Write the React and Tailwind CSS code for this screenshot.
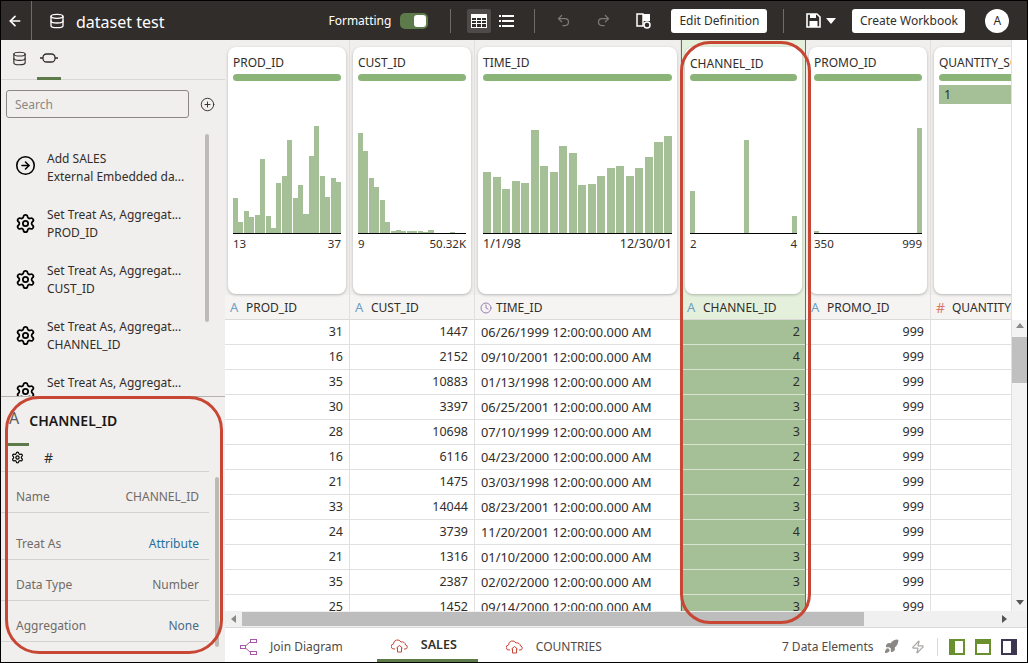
import { ArrowLeft, CirclePlus, CircleArrowRight, Database, Settings, Undo2, Redo2, Clock, Zap, Rocket } from 'lucide-react'

const columns = [
  { name: 'PROD_ID', width: 'w-[125px]', type: 'A', min: '13', max: '37', bars: [35, 11, 22, 16, 18, 74, 17, 5, 50, 57, 93, 35, 48, 19, 77, 107, 57, 36, 55, 51] },
  { name: 'CUST_ID', width: 'w-[125px]', type: 'A', min: '9', max: '50.32K', bars: [100, 82, 55, 46, 33, 11, 2, 3, 2, 2, 2, 2, 1, 3, 0, 0, 0, 1, 0, 0] },
  { name: 'TIME_ID', width: 'w-[206px]', type: 'T', min: '1/1/98', max: '12/30/01', bars: [61, 56, 44, 52, 50, 103, 67, 61, 87, 80, 48, 49, 57, 65, 67, 57, 65, 76, 91, 97] },
  { name: 'CHANNEL_ID', width: 'w-[125px]', type: 'A', min: '2', max: '4', selected: true, bars: [42, 0, 0, 0, 0, 0, 0, 0, 0, 0, 93, 0, 0, 0, 0, 0, 0, 0, 0, 17] },
  { name: 'PROMO_ID', width: 'w-[125px]', type: 'A', min: '350', max: '999', bars: [2, 0, 0, 0, 0, 0, 0, 0, 0, 0, 0, 0, 0, 0, 0, 0, 0, 0, 0, 105] },
]

const rows = [
  ['31', '1447', '06/26/1999', '2'],
  ['16', '2152', '09/10/2001', '4'],
  ['35', '10883', '01/13/1998', '2'],
  ['30', '3397', '06/25/2001', '3'],
  ['28', '10698', '07/10/1999', '3'],
  ['16', '6116', '04/23/2000', '2'],
  ['21', '1475', '03/03/1998', '2'],
  ['33', '14044', '08/23/2001', '3'],
  ['24', '3739', '11/20/2001', '4'],
  ['21', '1316', '01/10/2000', '3'],
  ['35', '2387', '02/02/2000', '3'],
  ['25', '1452', '09/14/2000', '3'],
]

const steps = [
  ['Set Treat As, Aggregat...', 'PROD_ID'],
  ['Set Treat As, Aggregat...', 'CUST_ID'],
  ['Set Treat As, Aggregat...', 'CHANNEL_ID'],
  ['Set Treat As, Aggregat...', 'PROMO_ID'],
]

const props = [
  { label: 'Name', value: 'CHANNEL_ID', h: 'h-[41px] pt-[10px]', tone: 'text-[#6f6b67]' },
  { label: 'Treat As', value: 'Attribute', h: 'h-[47px] pt-[15px]', tone: 'text-[#1f6f9c]' },
  { label: 'Data Type', value: 'Number', h: 'h-[41px] pt-[10px]', tone: 'text-[#6f6b67]' },
  { label: 'Aggregation', value: 'None', h: 'h-[41px] pt-[10px]', tone: 'text-[#4a6a85]' },
  { label: 'Measure', value: 'None', h: 'h-[41px] pt-[10px]', tone: 'text-[#6f6b67]' },
]

const CloudIcon = () => (
  <svg width="17" height="15" viewBox="0 0 17 15" fill="none" stroke="#c74634" strokeWidth="1">
    <path d="M4 11H3a2.5 2.5 0 0 1-.5-5 4 4 0 0 1 7.5-2 3.5 3.5 0 0 1 4.5 3A2 2 0 0 1 14 11h-1" />
    <path d="M5.5 10 8.5 7.5 11.500 10M6.500 9.500V14H10.500V9.500" />
  </svg>
)

const TypeIcon = ({ type }) => {
  if (type === 'T') return <Clock size={12} className="text-[#9a7fb5] shrink-0" />
  if (type === '#') return <span className="w-[12px] text-[14px] leading-none text-[#d9796b] shrink-0">#</span>
  return <span className="w-[12px] text-[13px] leading-none text-[#6f9fc4] shrink-0">A</span>
}

const Histogram = ({ col }) => {
  const gapClass = col.name === 'TIME_ID' ? 'gap-[1.3px]' : 'gap-[0.4px]'
  const labelClass = col.name === 'TIME_ID' ? 'text-[12.500px]' : 'text-[11.500px]'
  return (
    <div className="absolute left-[5px] right-[5px] top-[27px]">
      <div className="h-[7px] rounded-full bg-[#8bb578]" />
      <div className={`mt-[20px] flex h-[133px] items-end border-b border-black ${gapClass}`}>
        {col.bars.map((h, i) => (
          <div key={i} className="min-w-0 flex-1 bg-[#a5c096]" style={{ height: h }} />
        ))}
      </div>
      <div className={`mt-[1px] flex justify-between leading-[18px] text-[#312d2a] ${labelClass}`}>
        <span>{col.min}</span>
        <span>{col.max}</span>
      </div>
    </div>
  )
}

const Card = ({ col }) => (
  <div className={`h-[255px] shrink-0 px-[3px] pt-[7px] ${col.selected ? 'bg-[#e4f0dc]' : 'bg-[#f1efed]'}`}>
    <div className="relative h-[247px] rounded-lg bg-white shadow-[0_1px_3px_rgba(0,0,0,0.25)]">
      <div className={`absolute left-[5px] text-[12px] leading-4 text-[#312d2a] ${col.selected ? 'top-[9px]' : 'top-[8px]'}`}>{col.name}</div>
      <Histogram col={col} />
    </div>
  </div>
)

const Column = ({ col, index }) => {
  const isDate = col.type === 'T'
  const cellClass = isDate
    ? 'border-[#e2e0de] bg-white pl-[6px] text-[12.800px]'
    : col.selected
      ? 'justify-end border-[#d8e4d0] bg-[#a5c096] pr-[5px] text-[12.500px]'
      : 'justify-end border-[#e2e0de] bg-white pr-[6px] text-[12.500px]'
  return (
    <div className={`${col.width} shrink-0 ${col.selected ? 'border-x border-[#5d7a4b]' : 'border-r border-[#e2e0de]'}`}>
      <Card col={col} />
      <div className={`flex h-[25px] items-center gap-[4px] border-b border-[#dcdad8] pl-[5px] pt-[1px] text-[12px] text-[#312d2a] ${col.selected ? 'bg-[#e4f0dc]' : 'bg-[#f5f4f2]'}`}>
        <TypeIcon type={col.type} />
        <span>{col.name}</span>
      </div>
      {rows.map((row, i) => (
        <div key={i} className={`flex h-[25px] items-center border-b pt-[1px] text-[#312d2a] ${cellClass}`}>
          {isDate ? `${row[2]} 12:00:00.000 AM` : index === 4 ? '999' : row[index === 3 ? 3 : index]}
        </div>
      ))}
    </div>
  )
}

// cut off by the edge of the scroll area
const QuantityColumn = () => (
  <div className="w-[120px] shrink-0">
    <div className="h-[255px] bg-[#f1efed] pl-[3px] pt-[7px]">
      <div className="relative h-[247px] rounded-l-lg bg-white shadow-[0_1px_3px_rgba(0,0,0,0.25)]">
        <div className="absolute left-[5px] top-[8px] whitespace-nowrap text-[12px] leading-4 text-[#312d2a]">QUANTITY_SOLD</div>
        <div className="absolute left-[5px] right-0 top-[27px] h-[7px] rounded-l-full bg-[#8bb578]" />
        <div className="absolute left-[5px] right-0 top-[38px] h-[19px] bg-[#a5c096] pl-[5px] text-[12.500px] leading-[19px] text-[#312d2a]">1</div>
      </div>
    </div>
    <div className="flex h-[25px] items-center gap-[4px] border-b border-[#dcdad8] bg-[#f5f4f2] pl-[5px] pt-[1px] text-[12px] text-[#312d2a]">
      <TypeIcon type="#" />
      <span className="whitespace-nowrap">QUANTITY_SOLD</span>
    </div>
    {rows.map((row, i) => (
      <div key={i} className="h-[25px] border-b border-[#e2e0de] bg-white" />
    ))}
  </div>
)

const TableIcon = () => (
  <svg width="16" height="14" viewBox="0 0 16 14">
    <rect x="0.500" y="0.500" width="15" height="13" fill="#312d2a" stroke="#fff" />
    <rect x="1" y="1" width="14" height="3" fill="#fff" />
    <path d="M1 6.500H15M1 9.500H15M5.500 4V13M10.500 4V13" stroke="#fff" />
  </svg>
)

const ListIcon = () => (
  <svg width="15" height="12" viewBox="0 0 15 12" fill="#fff">
    <rect x="0" y="0" width="2" height="2" />
    <rect x="3" y="0" width="12" height="2" />
    <rect x="0" y="5" width="2" height="2" />
    <rect x="3" y="5" width="12" height="2" />
    <rect x="0" y="10" width="2" height="2" />
    <rect x="3" y="10" width="12" height="2" />
  </svg>
)

const SaveIcon = () => (
  <svg width="15" height="15" viewBox="0 0 15 15" className="ml-[22px]">
    <path d="M1 1H11L14 4V14H1Z" fill="none" stroke="#fff" strokeWidth="1.600" />
    <rect x="4" y="1" width="6" height="4" fill="#fff" />
    <rect x="3.500" y="8" width="8" height="6" fill="#fff" />
  </svg>
)

const PanelIcon = ({ kind }) => {
  const color = kind === 'right' ? '#3d3650' : '#6a8f2f'
  return (
    <svg width="16" height="16" viewBox="0 0 16 16">
      <rect x="1" y="1" width="14" height="14" fill="#fff" stroke={color} strokeWidth="2" />
      {kind === 'left' && <rect x="1" y="1" width="5" height="14" fill={color} />}
      {kind === 'top' && <rect x="1" y="1" width="14" height="4" fill={color} />}
      {kind === 'right' && <rect x="10" y="1" width="5" height="14" fill={color} />}
    </svg>
  )
}

const Header = () => (
  <header className="flex h-[39px] shrink-0 items-center bg-[#312d2a] text-white">
    <div className="flex h-full w-[31px] items-center justify-center border-r border-[#6f6b67]">
      <ArrowLeft size={16} strokeWidth={2.500} className="ml-[-3px]" />
    </div>
    <Database size={16} strokeWidth={2} className="ml-[17px]" />
    <span className="ml-[11px] pt-[2px] text-[16px] leading-none">dataset test</span>
    <span className="ml-[164px] pt-[1px] text-[12px]">Formatting</span>
    <div className="ml-[9px] flex h-[16px] w-[28px] items-center justify-end rounded-[5px] bg-[#5d7a4b] pr-[2px]">
      <div className="h-[12px] w-[12px] rounded-[3px] bg-white" />
    </div>
    <div className="ml-[22px] h-[24px] w-px bg-[#6f6b67]" />
    <div className="ml-[16px] flex h-[24px] w-[24px] items-center justify-center rounded-[2px] bg-[#4d4a47]">
      <TableIcon />
    </div>
    <div className="ml-[8px]"><ListIcon /></div>
    <div className="ml-[20px] h-[24px] w-px bg-[#6f6b67]" />
    <Undo2 size={15} className="ml-[21px] text-[#7d7976]" />
    <Redo2 size={15} className="ml-[25px] text-[#7d7976]" />
    <svg width="16" height="16" viewBox="0 0 16 16" className="ml-[25px]">
      <rect x="1" y="1" width="6" height="12" fill="none" stroke="#fff" strokeWidth="1.500" />
      <rect x="7" y="1" width="7" height="7" fill="#fff" />
      <circle cx="11" cy="12" r="3" fill="none" stroke="#fff" strokeWidth="1.500" />
    </svg>
    <button className="ml-[19px] h-[24px] w-[96px] rounded-[3px] bg-white pt-[1px] text-[12px] text-[#312d2a]">Edit Definition</button>
    <div className="ml-[16px] h-[24px] w-px bg-[#6f6b67]" />
    <SaveIcon />
    <svg width="10" height="6" viewBox="0 0 10 6" className="ml-[5px]" fill="#fff"><path d="M0 0H10L5 6Z" /></svg>
    <button className="ml-[16px] h-[24px] w-[113px] rounded-[3px] bg-white pt-[1px] text-[12px] text-[#312d2a]">Create Workbook</button>
    <div className="ml-[20px] flex h-[24px] w-[24px] items-center justify-center rounded-full bg-white text-[12px] text-[#312d2a]">A</div>
  </header>
)

const Sidebar = () => (
  <aside className="flex w-[224px] shrink-0 flex-col overflow-hidden bg-[#f1efed]">
    <div className="flex h-[40px] shrink-0 border-b border-[#d9d7d5]">
      <div className="flex h-full w-[36px] items-center justify-center pb-[3px] pl-[1px]">
        <Database size={15} strokeWidth={1.800} className="text-[#312d2a]" />
      </div>
      <div className="flex h-[40px] w-[24px] items-center justify-center border-b-[3px] border-[#5d7a4b] pb-[1px]">
        <svg width="18" height="10" viewBox="0 0 18 10" fill="none" stroke="#312d2a" strokeWidth="1.300">
          <rect x="3" y="1" width="12" height="8" rx="3.500" />
          <path d="M0 5H3M15 5H18" />
        </svg>
      </div>
    </div>
    <div className="flex shrink-0 items-center pl-[5px] pt-[10px]">
      <div className="flex h-[28px] w-[183px] items-center rounded-[3px] border border-[#8a8784] pl-[8px] pt-[1px] text-[12px] text-[#8a8784]">Search</div>
      <CirclePlus size={15} strokeWidth={1.500} className="ml-[11px] text-[#312d2a]" />
    </div>
    <div className="relative h-[278px] shrink-0 overflow-hidden">
      <div className="pt-[24px]">
        <div className="flex h-[56px] items-start pl-[14px] pt-[8px]">
          <CircleArrowRight size={21} strokeWidth={1.800} className="mt-[5px] shrink-0 text-black" />
          <div className="ml-[11px] text-[12px] leading-[18px] text-[#312d2a]">
            <div>Add SALES</div>
            <div>External Embedded da...</div>
          </div>
        </div>
        {steps.map((step) => (
          <div key={step[1]} className="flex h-[56px] items-start pl-[14px] pt-[8px]">
            <Settings size={21} strokeWidth={2} className="mt-[7px] shrink-0 text-black" />
            <div className="ml-[11px] text-[12px] leading-[18px] text-[#312d2a]">
              <div>{step[0]}</div>
              <div>{step[1]}</div>
            </div>
          </div>
        ))}
      </div>
      <div className="absolute left-[204px] top-[16px] h-[188px] w-[4px] rounded bg-[#bdb9b5]" />
    </div>
    <div className="relative flex-1 overflow-hidden border-t border-[#b5b2af]">
      <div className="flex h-[46px] items-start pl-[8px] pt-[12px]">
        <span className="text-[16px] leading-[18px] text-[#5f5b58]">A</span>
        <span className="ml-[10px] mt-[3px] text-[14px] font-semibold leading-[18px] text-[#1a1816]">CHANNEL_ID</span>
      </div>
      <div className="ml-[6px] h-[3px] w-[22px] bg-[#5d7a4b]" />
      <div className="flex h-[26px] w-[208px] items-center border-b border-[#d4d2d0] pl-[10px] pb-[3px]">
        <Settings size={13} strokeWidth={2.200} className="text-black" />
        <span className="ml-[20px] text-[14px] text-[#312d2a]">#</span>
      </div>
      {props.map((p) => (
        <div key={p.label} className={`flex ${p.h} w-[208px] items-center justify-between border-b border-[#d4d2d0] pl-[15px] pr-[10px] text-[12px]`}>
          <span className="text-[#6f6b67]">{p.label}</span>
          <span className={p.tone}>{p.value}</span>
        </div>
      ))}
      <div className="absolute left-[214px] top-[80px] h-[170px] w-[4px] rounded bg-[#bdb9b5]" />
    </div>
  </aside>
)

const BottomBar = () => (
  <div className="flex h-[34px] shrink-0 items-center bg-white pt-[3px] text-[12px] text-[#4f4b48]">
    <svg width="17" height="16" viewBox="0 0 17 16" fill="none" stroke="#a65aa6" className="ml-[15px]">
      <rect x="10.500" y="0.500" width="6" height="3" />
      <rect x="0.500" y="6.500" width="5" height="3" />
      <rect x="10.500" y="12.500" width="6" height="3" />
      <path d="M5.500 7 10.500 2.500M5.500 9 10.500 13.500" />
    </svg>
    <span className="ml-[13px]">Join Diagram</span>
    <div className="ml-[34px] flex h-full w-[101px] items-center border-b-[3px] border-[#5d7a4b] pl-[14px]">
      <CloudIcon />
      <span className="ml-[13px] text-[12.500px] font-semibold text-[#312d2a]">SALES</span>
    </div>
    <div className="ml-[28px]"><CloudIcon /></div>
    <span className="ml-[13px]">COUNTRIES</span>
    <span className="ml-[180px] text-[#4f4b48]">7 Data Elements</span>
    <Rocket size={15} className="ml-[10px] fill-[#8a8784] text-[#8a8784]" />
    <Zap size={14} className="ml-[12px] text-[#a9a6a3]" />
    <div className="ml-[12px] h-[18px] w-px bg-[#dcdad8]" />
    <div className="ml-[11px]"><PanelIcon kind="left" /></div>
    <div className="ml-[10px]"><PanelIcon kind="top" /></div>
    <div className="ml-[10px]"><PanelIcon kind="right" /></div>
  </div>
)

export default function App() {
  return (
    <div className="relative box-border flex h-[663px] w-[1028px] flex-col overflow-hidden border border-black bg-white font-['Noto_Sans',sans-serif]">
      <Header />
      <div className="flex min-h-0 flex-1">
        <Sidebar />
        <main className="flex min-w-0 flex-1 flex-col">
          <div className="flex min-h-0 flex-1">
            <div className="flex min-w-0 flex-1 overflow-hidden">
              {columns.map((col, i) => (
                <Column key={col.name} col={col} index={i} />
              ))}
              <QuantityColumn />
            </div>
            {/* vertical scrollbar */}
            <div className="flex w-[16px] shrink-0 flex-col border-l border-[#e2e0de] bg-white">
              <div className="h-[280px] shrink-0" />
              <div className="relative flex-1 bg-[#f3f3f3]">
                <div className="absolute left-[4px] top-[3px] h-0 w-0 border-x-[4px] border-b-[5px] border-x-transparent border-b-[#8a8784]" />
                <div className="absolute left-0 right-0 top-[17px] h-[46px] bg-[#c0c0c0]" />
                <div className="absolute bottom-[6px] left-[4px] h-0 w-0 border-x-[4px] border-t-[5px] border-x-transparent border-t-[#555]" />
              </div>
            </div>
          </div>
          {/* horizontal scrollbar */}
          <div className="flex h-[17px] shrink-0 items-center border-b border-[#dcdad8] bg-[#f0f0f0]">
            <div className="flex w-[17px] shrink-0 items-center justify-center">
              <div className="h-0 w-0 border-y-[4px] border-r-[5px] border-y-transparent border-r-[#8a8784]" />
            </div>
            <div className="h-[14px] w-[622px] bg-[#bdbdbd]" />
            <div className="flex-1" />
            <div className="mr-[20px] h-0 w-0 border-y-[4px] border-l-[5px] border-y-transparent border-l-[#555]" />
          </div>
          <BottomBar />
        </main>
      </div>
      {/* red annotation outlines */}
      <div className="pointer-events-none absolute left-[679px] top-[40px] h-[583px] w-[131px] rounded-[30px] border-[3px] border-[#c74634]" />
      <div className="pointer-events-none absolute left-[4px] top-[395px] h-[258px] w-[218px] rounded-[34px] border-[3px] border-[#c74634]" />
    </div>
  )
}
